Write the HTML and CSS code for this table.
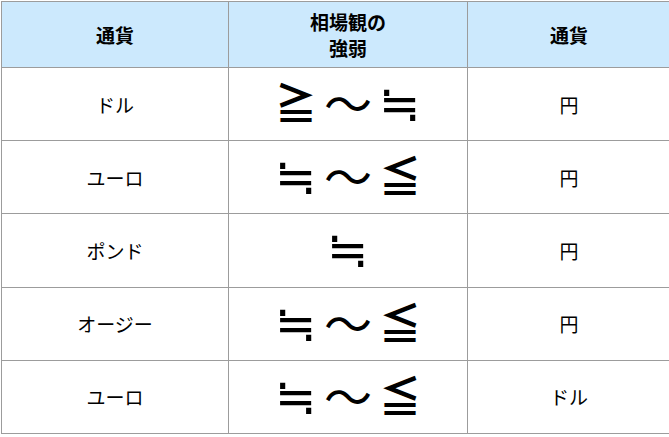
FILE: index.html
```html
<!DOCTYPE html>
<html lang="ja">
<head>
<meta charset="utf-8">
<link rel="stylesheet" href="styles.css">
</head>
<body>
<table class="rate-table">
  <thead>
    <tr>
      <th class="col-a">通貨</th>
      <th class="col-b">相場観の<br>強弱</th>
      <th class="col-c">通貨</th>
    </tr>
  </thead>
  <tbody>
    <tr><td>ドル</td><td><span class="sym"><span class="g rel">≧</span><span class="g wave">〜</span><span class="g eq">≒</span></span></td><td>円</td></tr>
    <tr><td>ユーロ</td><td><span class="sym"><span class="g eq">≒</span><span class="g wave">〜</span><span class="g rel">≦</span></span></td><td>円</td></tr>
    <tr><td>ポンド</td><td><span class="sym"><span class="g eq">≒</span></span></td><td>円</td></tr>
    <tr><td>オージー</td><td><span class="sym"><span class="g eq">≒</span><span class="g wave">〜</span><span class="g rel">≦</span></span></td><td>円</td></tr>
    <tr><td>ユーロ</td><td><span class="sym"><span class="g eq">≒</span><span class="g wave">〜</span><span class="g rel">≦</span></span></td><td>ドル</td></tr>
  </tbody>
</table>
</body>
</html>
```

FILE: styles.css
```css
html, body {
  margin: 0;
  padding: 0;
  background: #ffffff;
}
body {
  font-family: "Noto Sans CJK JP", "Noto Sans", sans-serif;
  color: #000;
}
.rate-table {
  margin: 1px 0 0 1px;
  width: 666px;
  height: 433px;
  border-collapse: collapse;
  table-layout: fixed;
  box-shadow: 2px 2px 2px rgba(0, 0, 0, 0.35);
}
.rate-table th,
.rate-table td {
  border: 1px solid #9c9c9c;
  text-align: center;
  vertical-align: middle;
  padding: 0;
}
.rate-table th {
  background: #cce9fd;
  font-weight: bold;
  font-size: 19px;
  line-height: 26px;
  height: 65px;
}
.col-a { width: 226px; }
.col-b { width: 238px; }
.col-c { width: 202px; }
.rate-table td {
  font-size: 19px;
  font-weight: normal;
  height: 72px;
}
.sym {
  display: inline-flex;
  align-items: center;
  justify-content: center;
  gap: 7px;
  height: 50px;
  position: relative;
  top: -3px;
}
.g {
  display: inline-block;
  text-align: center;
  line-height: 1;
}
.g.rel {
  font-size: 42px;
  font-weight: bold;
}
.g.wave {
  font-size: 48px;
  font-weight: normal;
}
.g.eq {
  font-family: "DejaVu Sans", sans-serif;
  font-size: 50px;
  font-weight: normal;
  position: relative;
  top: 3px;
}
```
